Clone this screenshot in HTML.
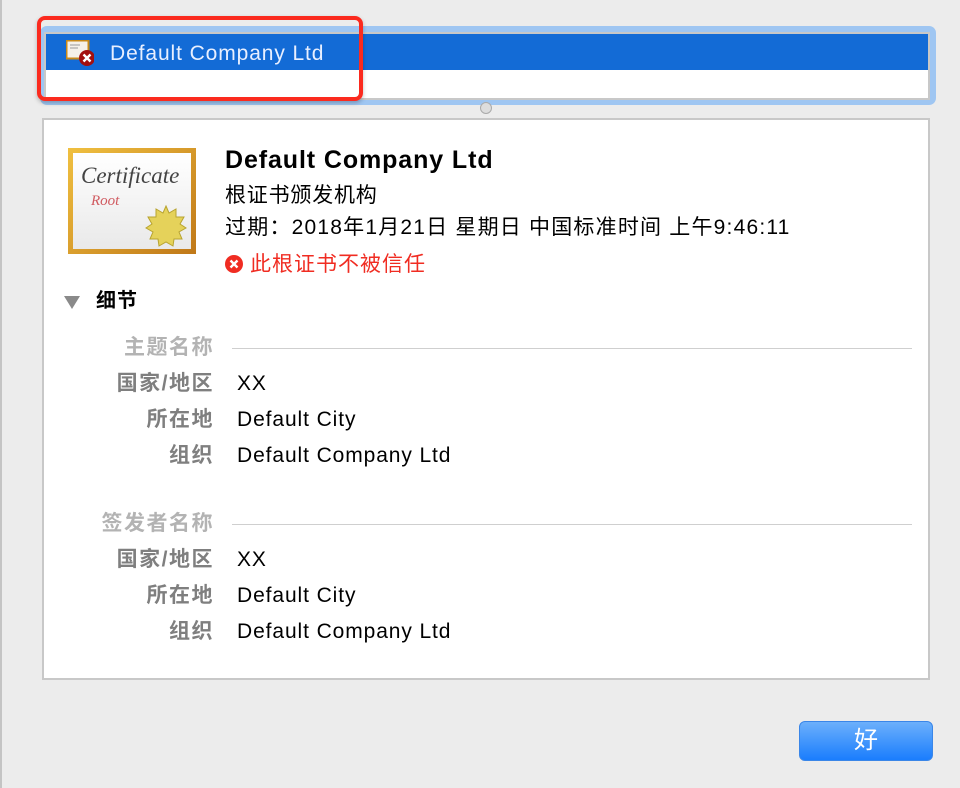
<!DOCTYPE html>
<html><head><meta charset="utf-8"><style>
*{margin:0;padding:0;box-sizing:border-box}
body{width:960px;height:788px;background:#ececec;position:relative;overflow:hidden;font-family:"Liberation Sans","Noto Sans CJK SC",sans-serif}
.a{position:absolute;white-space:nowrap}
.lab{position:absolute;right:746px;color:#7f7f7f;font-size:21px;font-weight:bold;letter-spacing:1.5px;white-space:nowrap;line-height:24px}
.sec{color:#b3b3b3}
.val{position:absolute;left:237px;font-size:21px;color:#000;white-space:nowrap;letter-spacing:0.9px;line-height:24px}
.line{position:absolute;left:232px;width:680px;height:1px;background:#cfcfcf}
</style></head><body>
<div class="a" style="left:0;top:0;width:2px;height:788px;background:#c4c4c4"></div>
<div class="a" style="left:40px;top:26px;width:896px;height:79px;background:#9fc6f2;border-radius:7px"></div>
<div class="a" style="left:44px;top:32px;width:886px;height:68px;background:#fff;border:2px solid #c8c8c8"></div>
<div class="a" style="left:46px;top:34px;width:882px;height:36px;background:#136bd6"></div>
<div class="a" style="left:66px;top:40px;width:28px;height:22px">
<svg width="28" height="28" viewBox="0 0 28 28"><rect x="0.5" y="0.5" width="22" height="18" fill="#f6f1ea" stroke="#c98a1a" stroke-width="2"/><path d="M4 5h10M4 8h8" stroke="#999" stroke-width="1"/><circle cx="21" cy="18" r="8" fill="#a30f0f"/><path d="M17.5 14.5l7 7M24.5 14.5l-7 7" stroke="#fff" stroke-width="2.4"/></svg></div>
<div class="a" style="left:110px;top:42px;font-size:21px;color:#e8efff;letter-spacing:0.9px;line-height:24px">Default Company Ltd</div>
<div class="a" style="left:37px;top:16px;width:326px;height:85px;border:4px solid #fb2a1e;border-radius:8px;box-shadow:0 2px 4px rgba(0,0,0,.25)"></div>
<div class="a" style="left:480px;top:102px;width:12px;height:12px;border-radius:50%;background:#ddd;border:1px solid #aaa"></div>
<div class="a" style="left:42px;top:118px;width:888px;height:562px;background:#fff;border:2px solid #c8c8c8"></div>
<div class="a" style="left:68px;top:148px;width:128px;height:106px;background:linear-gradient(135deg,#f0c040,#c07818);padding:5px">
<div style="width:100%;height:100%;background:linear-gradient(#fff,#e9e9e9);position:relative">
<div class="a" style="left:8px;top:10px;font-family:'Liberation Serif',serif;font-style:italic;font-size:23px;color:#444">Certificate</div>
<div class="a" style="left:18px;top:40px;font-family:'Liberation Serif',serif;font-style:italic;font-size:15px;color:#d05a60">Root</div>
<svg class="a" style="left:72px;top:52px" width="42" height="42" viewBox="0 0 42 42"><polygon points="21,1 24,8 31,4 31,12 39,12 35,19 41,23 34,27 37,34 29,34 28,41 21,37 14,41 13,34 5,34 8,27 1,23 7,19 3,12 11,12 11,4 18,8" fill="#e5d25a" stroke="#b8a430"/></svg>
</div></div>
<div class="a" style="left:225px;top:146px;font-size:25px;font-weight:bold;letter-spacing:0.9px;line-height:28px">Default Company Ltd</div>
<div class="a" style="left:225px;top:184px;font-size:21px;letter-spacing:0.8px;line-height:24px">根证书颁发机构</div>
<div class="a" style="left:225px;top:216px;font-size:21px;letter-spacing:1.2px;line-height:24px">过期：2018年1月21日 星期日 中国标准时间 上午9:46:11</div>
<div class="a" style="left:225px;top:255px;width:18px;height:18px;border-radius:50%;background:#f02c22"><svg width="18" height="18"><path d="M5.5 5.5l7 7M12.5 5.5l-7 7" stroke="#fff" stroke-width="2.4"/></svg></div>
<div class="a" style="left:250px;top:253px;font-size:21px;color:#f02c22;letter-spacing:1px;line-height:24px">此根证书不被信任</div>
<div class="a" style="left:64px;top:296px;width:0;height:0;border-left:8px solid transparent;border-right:8px solid transparent;border-top:13px solid #8a8a8a"></div>
<div class="a" style="left:96px;top:289px;font-size:20px;font-weight:bold;letter-spacing:1px;line-height:24px">细节</div>

<div class="lab sec" style="top:336px">主题名称</div><div class="line" style="top:348px"></div>
<div class="lab" style="top:372px">国家/地区</div><div class="val" style="top:372px">XX</div>
<div class="lab" style="top:408px">所在地</div><div class="val" style="top:408px">Default City</div>
<div class="lab" style="top:444px">组织</div><div class="val" style="top:444px">Default Company Ltd</div>

<div class="lab sec" style="top:512px">签发者名称</div><div class="line" style="top:524px"></div>
<div class="lab" style="top:548px">国家/地区</div><div class="val" style="top:548px">XX</div>
<div class="lab" style="top:584px">所在地</div><div class="val" style="top:584px">Default City</div>
<div class="lab" style="top:620px">组织</div><div class="val" style="top:620px">Default Company Ltd</div>

<div class="a" style="left:799px;top:721px;width:134px;height:40px;border-radius:6px;background:linear-gradient(#6cb0fb,#1a7dfd);border:1px solid #3a86e8;color:#fff;font-size:24px;text-align:center;line-height:38px">好</div>
</body></html>
